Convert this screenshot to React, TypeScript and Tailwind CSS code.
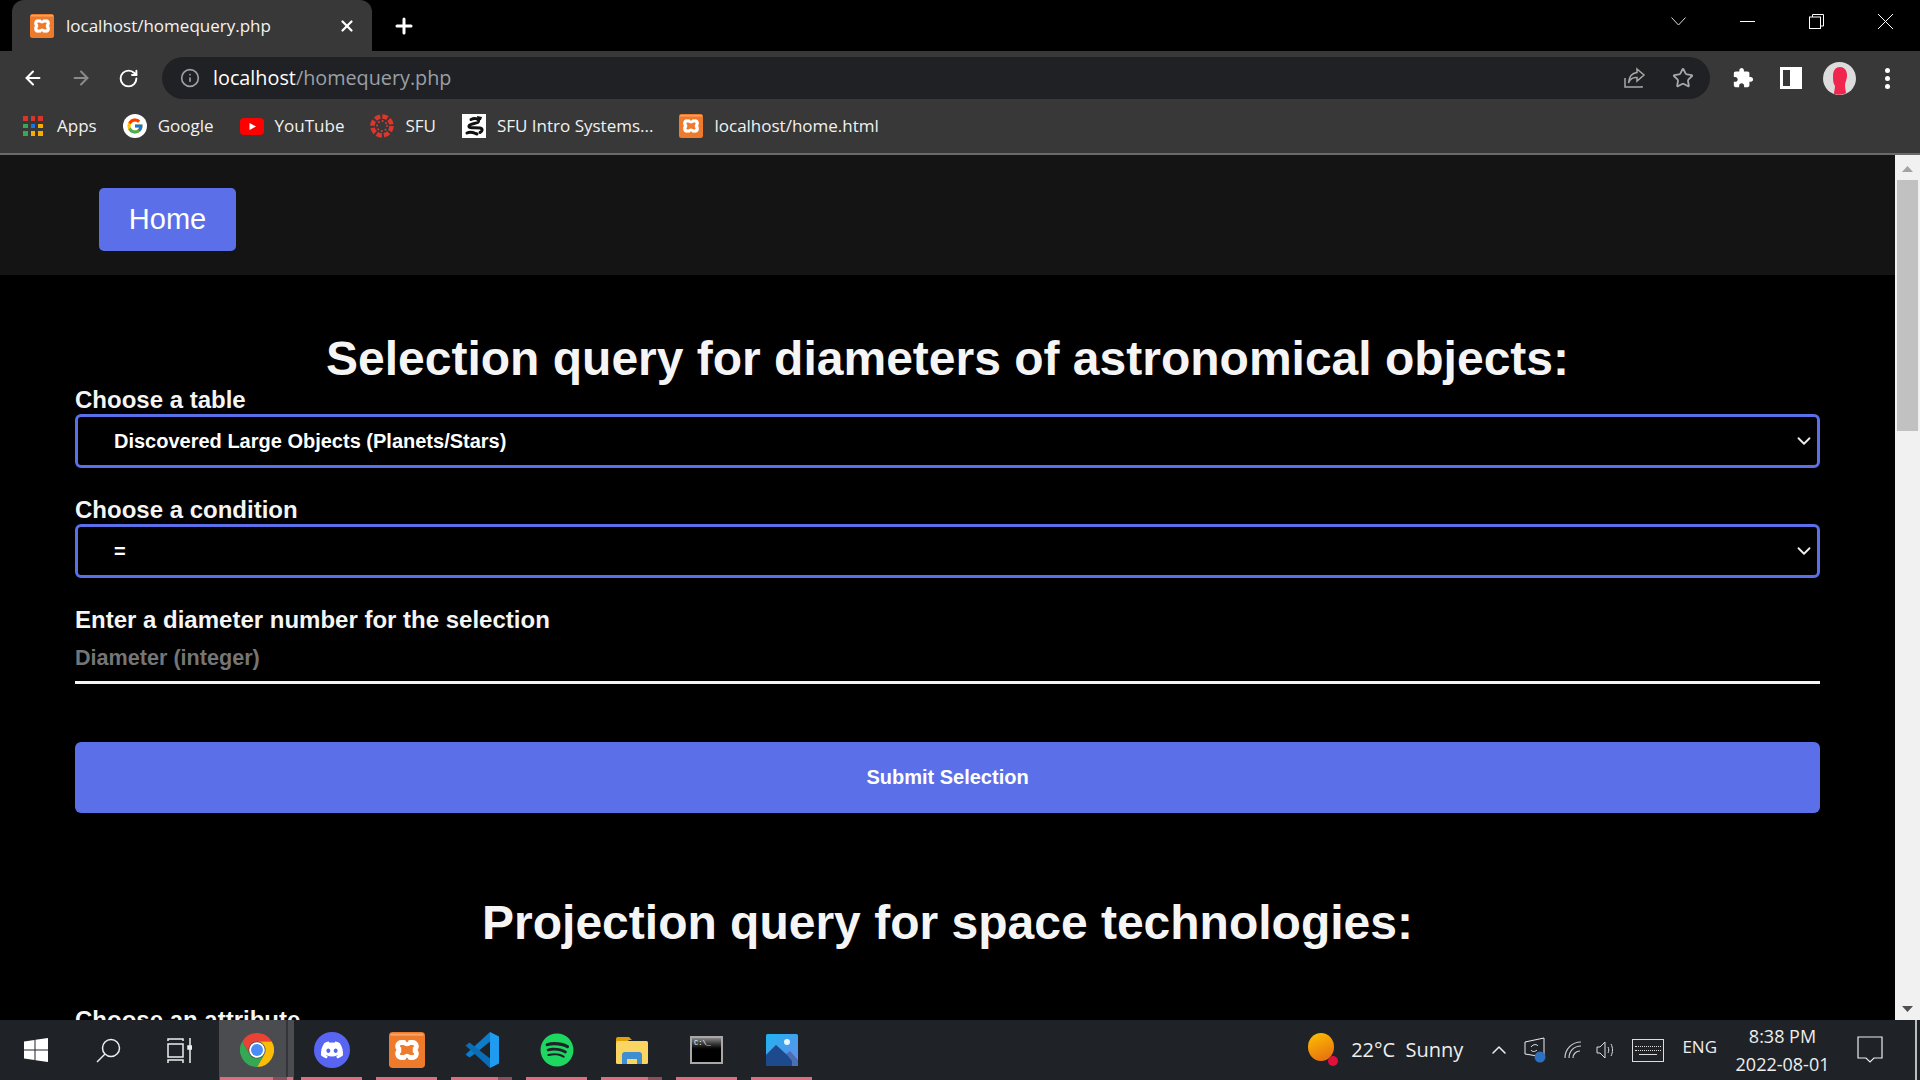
import { ArrowLeft, ArrowRight, ChevronDown, ChevronUp, Info, Plus, RotateCw, Star, X } from "lucide-react";
import { FaDiscord, FaSpotify } from "react-icons/fa";
import { FcGoogle } from "react-icons/fc";

const XamppIcon = ({ size = 24 }: { size?: number }) => (
  <svg width={size} height={size} viewBox="0 0 24 24" className="shrink-0">
    <rect width="24" height="24" rx="2.500" fill="#ee7a2c" />
    <rect x="1" y="1" width="22" height="1.500" fill="#f7a266" />
    <g fill="none" stroke="#fff" strokeWidth="3.200" strokeLinecap="round">
      <path d="M10 7H8.500a2.500 2.500 0 0 0-.5 5 2.500 2.500 0 0 0 .5 5H10" />
      <path d="M14 7h1.500a2.500 2.500 0 0 1 .5 5 2.500 2.500 0 0 1-.5 5H14" />
      <path d="M10 7q2 2.500 4 0M10 17q2-2.500 4 0" strokeWidth="2.600" />
    </g>
  </svg>
);

const AppsIcon = () => {
  const colors = ["#d9362b", "#d9362b", "#d9362b", "#34a853", "#1a73e8", "#f9ab00", "#34a853", "#f9ab00", "#f9ab00"];
  return (
    <div className="w-[23px] shrink-0">
      <div className="grid grid-cols-3 gap-[3px] w-5 h-5">
        {colors.map((c, i) => (
          <div key={i} className="w-[4.500px] h-[4.500px]" style={{ background: c }} />
        ))}
      </div>
    </div>
  );
};

const YoutubeIcon = () => (
  <svg width="24" height="17" viewBox="0 0 24 17" className="shrink-0">
    <rect width="24" height="17" rx="4" fill="#f00" />
    <path d="M9.500 5l6.500 3.500-6.500 3.500z" fill="#fff" />
  </svg>
);

const SfuIcon = () => (
  <svg width="24" height="24" viewBox="0 0 24 24" className="shrink-0">
    <circle cx="12" cy="12" r="9.500" fill="none" stroke="#e0352b" strokeWidth="4.500" strokeDasharray="5.400 2.060" />
    <circle cx="12" cy="12" r="5" fill="none" stroke="#e0352b" strokeWidth="2" strokeLinecap="round" strokeDasharray="0.100 3.830" />
  </svg>
);

const DragonIcon = () => (
  <svg width="24" height="24" viewBox="0 0 24 24" className="shrink-0">
    <rect width="24" height="24" fill="#fff" />
    <g fill="none" stroke="#111" strokeWidth="3" strokeLinecap="round">
      <path d="M9 5.500C12 4 17 4 16.500 7.500 16 10 8 9 7 12c-.8 2.500 6 1.500 11 2 3 .5 2.500 3.500 0 4.500" />
      <path d="M5 19c4-2 7 0 10 1" />
    </g>
    <path d="M15 2l5 1-1 3-3 1z" fill="#111" />
  </svg>
);

const Bookmark = ({ icon, label }: { icon: React.ReactNode; label: string }) => (
  <div className="flex items-center gap-[11px] mr-[26px]">
    {icon}
    <span className="text-[17px] text-[#f1f1f1] whitespace-nowrap">{label}</span>
  </div>
);

const ChromeLogo = () => (
  <svg width="34" height="34" viewBox="0 0 48 48">
    <path d="M24 12h20.800A24 24 0 0 0 3.200 12L13.600 30A12 12 0 0 1 24 12z" fill="#ea4335" />
    <path d="M24 12h20.800A24 24 0 0 1 24 48l10.400-18A12 12 0 0 0 24 12z" fill="#fbbc04" />
    <path d="M3.200 12L13.600 30a12 12 0 0 0 20.800 0L24 48A24 24 0 0 1 3.200 12z" fill="#34a853" />
    <circle cx="24" cy="24" r="11" fill="#fff" />
    <circle cx="24" cy="24" r="8.500" fill="#4a8df6" />
  </svg>
);

const VscodeLogo = () => (
  <svg width="36" height="36" viewBox="0 0 36 36">
    <path d="M26 0l9 4.500v27L26 36z" fill="#1f9cf0" />
    <path d="M26 0v9.500L12 21l-6.500 4.500-4-3L26 0z" fill="#0d7ccb" />
    <path d="M1.500 13.500l4-3L26 26.500V36L1.500 13.500z" fill="#0a6db5" />
  </svg>
);

const ExplorerLogo = () => (
  <svg width="32" height="28" viewBox="0 0 32 28">
    <path d="M0 3a2 2 0 0 1 2-2h11l3 3h-3L11 6H0z" fill="#e0a008" />
    <rect y="5" width="32" height="23" rx="1.500" fill="#fbd561" />
    <path d="M6 28v-9a3 3 0 0 1 3-3h14a3 3 0 0 1 3 3v9h-5v-5H11v5z" fill="#3d8fd1" />
  </svg>
);

const CmdLogo = () => (
  <div className="w-[33px] h-[28px] border-2 border-[#a8a8a8] bg-black overflow-hidden">
    <div className="h-[13px] bg-gradient-to-b from-[#888] to-black text-[7px] leading-[11px] pl-[2px] font-['Liberation_Mono',monospace] text-white">
      C:\_
    </div>
  </div>
);

const PhotosLogo = () => (
  <svg width="32" height="32" viewBox="0 0 32 32">
    <defs>
      <linearGradient id="ph" x1="0" y1="0" x2="1" y2="1">
        <stop offset="0" stopColor="#1eb4f0" />
        <stop offset="1" stopColor="#6a8ae8" />
      </linearGradient>
    </defs>
    <rect width="32" height="32" rx="1.500" fill="url(#ph)" />
    <circle cx="21" cy="8" r="3" fill="#e8f7ff" />
    <path d="M0 21l10-10 10 9 4-3 8 9v6H0z" fill="#4a6fb5" />
    <path d="M0 21l10-10 11 10 5 6v5H0z" fill="#1c4a8c" />
  </svg>
);

const taskApps = [
  { node: <ChromeLogo />, active: true, stacked: true },
  { node: <div className="w-9 h-9 rounded-full bg-[#5865f2] flex items-center justify-center"><FaDiscord className="w-6 h-6 text-white" /></div>, active: false, stacked: false },
  { node: <XamppIcon size={36} />, active: false, stacked: false },
  { node: <VscodeLogo />, active: false, stacked: true },
  { node: <FaSpotify className="w-[34px] h-[34px] text-[#1ed760]" />, active: false, stacked: false },
  { node: <ExplorerLogo />, active: false, stacked: true },
  { node: <CmdLogo />, active: false, stacked: false },
  { node: <PhotosLogo />, active: false, stacked: false },
];

const labelClass = "block h-[30px] text-[24px] leading-[32px] font-semibold text-[#f5f5f5]";
const headingClass = "h-[52px] text-[48px] leading-[54px] font-bold text-center text-[#f5f5f5]";

const Field = ({ label, value }: { label: string; value: string }) => (
  <div className="mb-[26px]">
    <label className={labelClass}>{label}</label>
    <div className="relative">
      <select
        defaultValue={value}
        className="block w-full h-[54px] appearance-none bg-black border-[3px] border-[#5a6fe8] rounded-[6px] pl-[36px] text-[20px] font-bold text-white outline-none"
      >
        <option value={value}>{value}</option>
      </select>
      <ChevronDown className="absolute right-[5px] top-[16px] w-[22px] h-[22px] text-[#eeeeee] pointer-events-none" strokeWidth={2} />
    </div>
  </div>
);

export default function App() {
  return (
    <div className="h-screen flex flex-col overflow-hidden bg-black font-['Liberation_Sans',Arial,sans-serif]">
      {/* browser chrome */}
      <div className="font-['Open_Sans','Noto_Sans',sans-serif]">
        <div className="h-[51px] bg-black flex items-end">
          <div className="ml-[12px] w-[360px] h-[51px] bg-[#383838] rounded-t-[12px] flex items-center pl-[18px] pr-[16px] gap-[12px]">
            <XamppIcon />
            <span className="text-[17px] text-[#f3f3f3] flex-1">localhost/homequery.php</span>
            <X className="w-[18px] h-[18px] text-white" strokeWidth={3} />
          </div>
          <div className="h-[51px] flex items-center ml-[20px]">
            <Plus className="w-[24px] h-[24px] text-white" strokeWidth={3} />
          </div>
          <div className="flex-1" />
          <div className="h-[42px] flex self-start items-center pr-[27px] gap-[54px] text-white">
            <svg width="15" height="9" viewBox="0 0 15 9" fill="none" stroke="#ddd"><path d="M.5.500l7 7.500 7-7.500" /></svg>
            <div className="w-[15px] h-px bg-white" />
            <svg width="15" height="15" viewBox="0 0 15 15" fill="none" stroke="#fff"><path d="M3.500 3V.500h11V12H12" /><rect x=".5" y="3" width="11" height="11.500" /></svg>
            <svg width="15" height="15" viewBox="0 0 15 15" fill="none" stroke="#fff"><path d="M0 0l15 15M15 0L0 15" /></svg>
          </div>
        </div>
        <div className="h-[48px] bg-[#383838] flex items-center pt-[6px] pl-[22px] pr-[22px]">
          <ArrowLeft className="w-[22px] h-[22px] text-white" strokeWidth={2.200} />
          <ArrowRight className="w-[22px] h-[22px] text-[#8a8a8a] ml-[26px]" strokeWidth={2.200} />
          <RotateCw className="w-[21px] h-[21px] text-white ml-[26px]" strokeWidth={2.200} />
          <div className="ml-[23px] w-[1548px] h-[42px] rounded-full bg-[#202124] flex items-center pl-[18px] pr-[16px]">
            <Info className="w-[20px] h-[20px] text-[#9aa0a6]" />
            <span className="ml-[13px] text-[19.800px] text-white">localhost<span className="text-[#9aa0a6]">/homequery.php</span></span>
            <div className="flex-1" />
            <svg width="22" height="22" viewBox="0 0 22 22" fill="none" stroke="#a8a8a8" strokeWidth="1.500">
              <path d="M1 11v9h17v-1M13 2l7 6-7 6v-3.500C9 10 6 12 4.500 16 5 10 8 6 13 5.500z" />
            </svg>
            <Star className="ml-[26px] w-[22px] h-[22px] text-[#a8a8a8]" strokeWidth={2} />
          </div>
          <svg width="22" height="22" viewBox="0 0 24 24" fill="#fff" className="ml-[22px]">
            <path d="M20.500 11H19V7c0-1.100-.9-2-2-2h-4V3.500C13 2.120 11.880 1 10.500 1S8 2.120 8 3.500V5H4c-1.100 0-1.990.9-1.990 2v3.800H3.500c1.490 0 2.700 1.210 2.700 2.700s-1.210 2.700-2.700 2.700H2V20c0 1.100.9 2 2 2h3.800v-1.500c0-1.490 1.210-2.700 2.700-2.700 1.490 0 2.700 1.210 2.700 2.700V22H17c1.100 0 2-.9 2-2v-4h1.500c1.380 0 2.500-1.120 2.500-2.500S21.880 11 20.500 11z" />
          </svg>
          <div className="ml-[26px] w-[22px] h-[22px] border-[3px] border-white flex justify-end">
            <div className="w-[9px] bg-white" />
          </div>
          <svg width="33" height="33" viewBox="0 0 33 33" className="ml-[21px]">
            <circle cx="16.500" cy="16.500" r="16.500" fill="#dcdcdc" />
            <path d="M11 32c0-3 1-5 1-8-2-3-2-6-2-10 0-6 3-9 7-9s7 3 7 8c0 5-2 7-2 11 0 3 1 5 1 7-3 2-9 2-12 1z" fill="#f0264f" />
          </svg>
          <div className="ml-[29px] flex flex-col gap-[3px]">
            <div className="w-[5px] h-[5px] rounded-full bg-white" />
            <div className="w-[5px] h-[5px] rounded-full bg-white" />
            <div className="w-[5px] h-[5px] rounded-full bg-white" />
          </div>
        </div>
        <div className="h-[54px] bg-[#383838] flex items-center pl-[23px] border-b-2 border-[#6a6a6a] box-content">
          <Bookmark icon={<AppsIcon />} label="Apps" />
          <Bookmark icon={<div className="w-6 h-6 rounded-full bg-white flex items-center justify-center"><FcGoogle className="w-[18px] h-[18px]" /></div>} label="Google" />
          <Bookmark icon={<YoutubeIcon />} label="YouTube" />
          <Bookmark icon={<SfuIcon />} label="SFU" />
          <Bookmark icon={<DragonIcon />} label="SFU Intro Systems..." />
          <Bookmark icon={<XamppIcon />} label="localhost/home.html" />
        </div>
      </div>

      {/* page */}
      <div className="flex-1 min-h-0 flex">
        <div className="flex-1 min-w-0 overflow-hidden bg-black">
          <nav className="h-[120px] bg-[#141414] pl-[99px] pt-[33px]">
            <button className="w-[137px] h-[63px] bg-[#5a6fe8] rounded-[5px] text-white text-[29px]">Home</button>
          </nav>
          <div className="px-[75px]">
            <h1 className={`mt-[57px] ${headingClass}`}>
              Selection query for diameters of astronomical objects:
            </h1>
            <Field label="Choose a table" value="Discovered Large Objects (Planets/Stars)" />
            <Field label="Choose a condition" value="=" />
            <label className={labelClass}>Enter a diameter number for the selection</label>
            <input
              placeholder="Diameter (integer)"
              className="block w-full h-[50px] pt-[1px] bg-transparent border-b-[3px] border-[#f5f5f5] text-[21.600px] font-bold outline-none placeholder:text-[#757575]"
            />
            <button className="block w-full h-[71px] mt-[58px] pb-[2px] bg-[#5a6fe8] rounded-[6px] text-white text-[20px] font-bold">
              Submit Selection
            </button>
            <h1 className={`mt-[83px] ${headingClass}`}>
              Projection query for space technologies:
            </h1>
            <label className={`mt-[56px] ${labelClass}`}>Choose an attribute</label>
          </div>
        </div>
        {/* scrollbar */}
        <div className="w-[25px] bg-[#f1f1f1] flex flex-col items-center">
          <svg width="11" height="25" viewBox="0 0 11 25" className="shrink-0"><path d="M0 17l5.500-6 5.500 6z" fill="#a3a3a3" /></svg>
          <div className="w-[21px] h-[251px] bg-[#c1c1c1]" />
          <div className="flex-1" />
          <svg width="11" height="20" viewBox="0 0 11 20" className="shrink-0"><path d="M0 6l5.500 6 5.500-6z" fill="#505050" /></svg>
        </div>
      </div>

      {/* taskbar */}
      <div className="h-[60px] shrink-0 bg-[#1f2328] flex items-center font-['Open_Sans','Noto_Sans',sans-serif] text-[#eeeeee]">
        <div className="w-[72px] flex justify-center">
          <svg width="24" height="24" viewBox="0 0 24 24" fill="#fff"><path d="M0 3.500l10.500-1.500v9.500H0zM11.500 1.800L24 0v11.500H11.500zM0 12.500h10.500V22L0 20.500zM11.500 12.500H24V24l-12.500-1.800z" /></svg>
        </div>
        <div className="w-[72px] flex justify-center">
          <svg width="25" height="25" viewBox="0 0 25 25" fill="none" stroke="#eee" strokeWidth="1.500"><circle cx="15" cy="10" r="8.500" /><path d="M9 16l-8 8" /></svg>
        </div>
        <div className="w-[75px] flex justify-center pr-[4px]">
          <svg width="25" height="25" viewBox="0 0 25 25" fill="none" stroke="#eee" strokeWidth="1.500"><path d="M1 3V1h15v2M1 6h15v13H1zM1 25v-3h15v3M23 0v25" /><rect x="21" y="8" width="4" height="3" fill="#eee" /></svg>
        </div>
        <div className="flex h-full">
          {taskApps.map((app, i) => (
            <div key={i} className={`relative w-[75px] h-full flex items-center justify-center ${app.active ? "bg-[#4a4c4f]" : ""}`}>
              {app.node}
              {app.active && <div className="absolute top-0 bottom-0 right-[6px] w-[2px] bg-[#333539]" />}
              <div className={`absolute bottom-0 h-[3px] bg-[#d96f80] ${app.active ? "left-[1px] right-[1px]" : "left-[7px] right-[7px]"}`} />
              {app.stacked && <div className="absolute bottom-0 right-[7px] w-[14px] h-[3px] bg-[#8a4f5a]" />}
            </div>
          ))}
        </div>
        <div className="flex-1" />
        <svg width="30" height="34" viewBox="0 0 30 34" className="shrink-0">
          <defs>
            <linearGradient id="sun" x1="0" y1="0" x2="0.400" y2="1">
              <stop offset="0" stopColor="#fec200" />
              <stop offset="1" stopColor="#e8770f" />
            </linearGradient>
          </defs>
          <ellipse cx="13" cy="14" rx="13" ry="14" fill="url(#sun)" />
          <circle cx="25" cy="28" r="5" fill="#e0103c" />
        </svg>
        <span className="ml-[13px] text-[20px] whitespace-pre">22°C  Sunny</span>
        <ChevronUp className="ml-[24px] w-[24px] h-[24px]" strokeWidth={1.500} />
        <svg width="23" height="26" viewBox="0 0 23 26" fill="none" stroke="#eee" className="ml-[13px]">
          <path d="M1 5l19-4v19L1 17z" />
          <path d="M7 10c2-3 6-3 7-1M13 13c-2 2-5 2-6 0" />
          <circle cx="16" cy="20" r="5.500" fill="#2d70c0" stroke="none" />
        </svg>
        <svg width="18" height="18" viewBox="0 0 18 18" fill="none" stroke="#ccc" strokeWidth="1.200" className="ml-[17px]">
          <path d="M1 17C1 8 8 1 17 1M5 17c0-7 5-12 12-12M9 17c0-4 3-7 7-7" />
        </svg>
        <svg width="20" height="20" viewBox="0 0 20 20" fill="none" stroke="#ddd" className="ml-[14px]">
          <path d="M1 7h3l5-5v16l-5-5H1zM12 7c1 2 1 4 0 6M15 4c2 4 2 8 0 12" />
        </svg>
        <div className="ml-[16px] w-[32px] h-[23px] border border-[#ddd] flex flex-col justify-center gap-[3px] px-[2px]">
          <div className="border-t border-dotted border-[#ddd]" />
          <div className="border-t border-dotted border-[#ddd]" />
          <div className="border-t border-[#ddd] mx-[4px]" />
        </div>
        <span className="ml-[18px] text-[17px] -mt-[6px]">ENG</span>
        <div className="ml-[19px] w-[93px] flex flex-col items-center text-[18px] leading-[28px] whitespace-nowrap">
          <span>8:38 PM</span>
          <span>2022-08-01</span>
        </div>
        <svg width="26" height="28" viewBox="0 0 26 28" fill="none" stroke="#eee" strokeWidth="1.200" className="ml-[28px]">
          <path d="M1 1h24v21h-8l-4 4-4-4H1z" />
        </svg>
        <div className="w-[32px]" />
        <div className="w-[2px] h-full bg-[#bdbdbd]" />
        <div className="w-[3px]" />
      </div>
    </div>
  );
}
